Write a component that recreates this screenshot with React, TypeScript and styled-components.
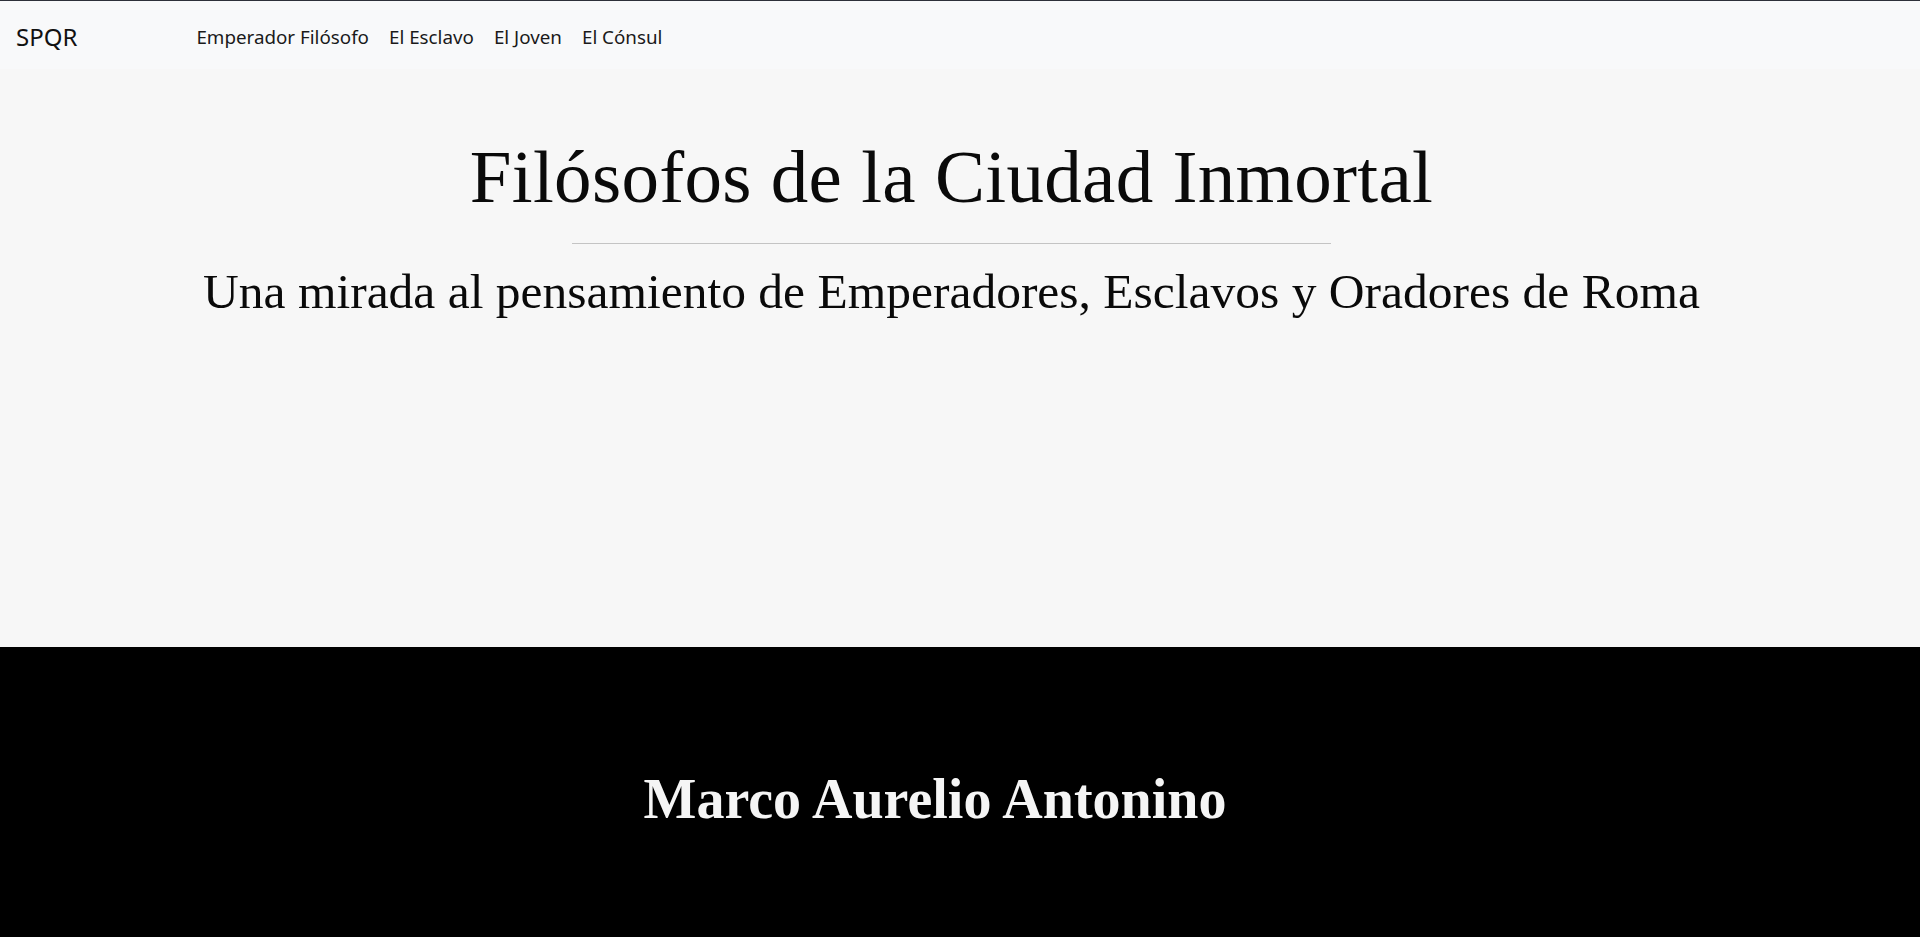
import React from "react";
import styled, { createGlobalStyle } from "styled-components";

const Global = createGlobalStyle`
  html, body { margin: 0; padding: 0; }
  body {
    background: #f7f7f7;
    font-family: "Noto Sans", "Liberation Sans", sans-serif;
    color: #111;
  }
`;

const NavBar = styled.nav`
  display: flex;
  align-items: center;
  box-sizing: border-box;
  height: 69px;
  padding: 3px 16px 0;
  background: #f8f9fa;
  border-top: 1px solid #2d3039;
`;

const Brand = styled.a`
  font-family: "Noto Sans", sans-serif;
  font-size: 24px;
  color: #111;
  text-decoration: none;
  line-height: 1;
`;

const Links = styled.ul`
  display: flex;
  gap: 20px;
  margin: 0 0 0 119px;
  padding: 0;
  list-style: none;
`;

const NavLink = styled.a`
  font-family: "Noto Sans", sans-serif;
  font-size: 18.8px;
  color: #1a1a1a;
  text-decoration: none;
`;

const Hero = styled.header`
  display: flex;
  flex-direction: column;
  align-items: center;
  height: 578px;
  padding: 63px 17px 0 0;
  box-sizing: border-box;
  background: #f7f7f7;
  text-align: center;
`;

const Title = styled.h1`
  margin: 0;
  font-family: "Liberation Serif", serif;
  font-weight: 400;
  font-size: 75px;
  line-height: 1.2;
  letter-spacing: 0.3px;
  color: #0a0a0a;
`;

const Rule = styled.hr`
  width: 759px;
  margin: 21px 0 0;
  border: 0;
  border-top: 1px solid #c4c4c4;
`;

const Subtitle = styled.h2`
  margin: 18px 0 0;
  font-family: "Liberation Serif", serif;
  font-weight: 400;
  font-size: 49.5px;
  line-height: 1.2;
  color: #0a0a0a;
`;

const Section = styled.section`
  background: #000;
  min-height: 13150px;
`;

const Row = styled.div`
  margin-right: -28px;
  padding: 119px 78px 0 0;
  text-align: center;
`;

const Name = styled.h2`
  margin: 0;
  font-family: "Liberation Serif", serif;
  font-weight: 700;
  font-size: 56px;
  line-height: 1.2;
  color: #f5f5f5;
`;

export default function App() {
  const links = ["Emperador Filósofo", "El Esclavo", "El Joven", "El Cónsul"];
  return (
    <>
      <Global />
      <NavBar>
        <Brand href="#">SPQR</Brand>
        <Links>
          {links.map((l) => (
            <li key={l}>
              <NavLink href="#">{l}</NavLink>
            </li>
          ))}
        </Links>
      </NavBar>
      <Hero>
        <Title>Filósofos de la Ciudad Inmortal</Title>
        <Rule />
        <Subtitle>Una mirada al pensamiento de Emperadores, Esclavos y Oradores de Roma</Subtitle>
      </Hero>
      <Section>
        <Row>
          <Name>Marco Aurelio Antonino</Name>
        </Row>
      </Section>
    </>
  );
}
